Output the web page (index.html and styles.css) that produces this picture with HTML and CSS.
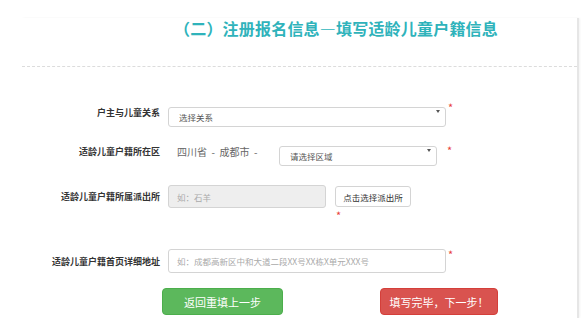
FILE: index.html
```html
<!DOCTYPE html>
<html lang="zh-CN">
<head>
    <meta charset="UTF-8">
    <meta name="viewport" content="width=device-width, initial-scale=1.0">
    <title>注册报名信息</title>
    <link rel="stylesheet" href="styles.css">
</head>
<body>

    <div class="panel">

        <h2 class="title">（二）注册报名信息—填写适龄儿童户籍信息</h2>
        <div class="divider"></div>

        <form class="reg-form">

            <div class="row row-relation">
                <label class="row-label">户主与儿童关系</label>
                <div class="select-wrap w-wide">
                    <select>
                        <option>选择关系</option>
                    </select>
                </div>
                <span class="req">*</span>
            </div>

            <div class="row row-area">
                <label class="row-label">适龄儿童户籍所在区</label>
                <span class="region">四川省 &nbsp;-&nbsp; 成都市 &nbsp;-</span>
                <div class="select-wrap w-area">
                    <select>
                        <option>请选择区域</option>
                    </select>
                </div>
                <span class="req req-far">*</span>
            </div>

            <div class="row row-police">
                <label class="row-label">适龄儿童户籍所属派出所</label>
                <input type="text" class="text-input w-police" placeholder="如：石羊" disabled>
                <div class="pick-col">
                    <button type="button" class="btn-pick">点击选择派出所</button>
                    <span class="req">*</span>
                </div>
            </div>

            <div class="row row-address">
                <label class="row-label">适龄儿童户籍首页详细地址</label>
                <input type="text" class="text-input w-wide" placeholder="如：成都高新区中和大道二段XX号XX栋X单元XXX号">
                <span class="req">*</span>
            </div>

            <div class="actions">
                <button type="button" class="btn btn-back">返回重填上一步</button>
                <button type="button" class="btn btn-next">填写完毕，下一步！</button>
            </div>

        </form>
    </div>

</body>
</html>
```

FILE: styles.css
```css
/* General Styles */
body {
    margin: 0;
    padding: 0;
    font-family: "Noto Sans CJK SC", "Noto Sans", sans-serif;
    background-color: #fff;
    color: #333;
}

.panel {
    width: 555px;
    height: 300px;
    margin: 18px 0 0 22px;
    border-right: 2px solid #e6e6e6;
    box-shadow: 1px 0 2px rgba(0, 0, 0, 0.05);
}

.title {
    margin: 0;
    padding-left: 152px;
    font-size: 16px;
    letter-spacing: 0.2px;
    line-height: 20px;
    font-weight: bold;
    color: #2fb3bb;
    white-space: nowrap;
}

.divider {
    margin-top: 28px;
    border-top: 1px dashed #dcdcdc;
}

/* Form rows */
.row {
    display: flex;
    align-items: center;
}

.row-label {
    width: 138px;
    margin-right: 8px;
    text-align: right;
    font-size: 9px;
    font-weight: bold;
    color: #333;
    white-space: nowrap;
}

.row-relation {
    margin-top: 35px;
    height: 20px;
}

.row-area {
    margin-top: 19px;
    height: 20px;
}

.row-police {
    margin-top: 24px;
    align-items: flex-start;
}

.row-police .row-label {
    line-height: 23px;
}

.row-address {
    margin-top: 29px;
    height: 24px;
}

.req {
    align-self: flex-start;
    margin-left: 2px;
    font-size: 11px;
    line-height: 10px;
    color: #e8403a;
}

.req-far {
    margin-left: 10px;
    margin-top: 4px;
}

/* Selects */
.select-wrap {
    position: relative;
    height: 20px;
}

.select-wrap::after {
    content: "";
    position: absolute;
    right: 6px;
    top: 8px;
    border-left: 2px solid transparent;
    border-right: 2px solid transparent;
    border-top: 3px solid #555;
}

.select-wrap select {
    appearance: none;
    width: 100%;
    height: 100%;
    padding: 0 10px;
    border: 1px solid #d4d4d4;
    border-radius: 3px;
    background: #fff;
    font-family: inherit;
    font-size: 8.5px;
    color: #555;
}

.w-wide {
    width: 278px;
}

.w-area {
    width: 158px;
}

.region {
    width: 102px;
    padding-left: 9px;
    font-size: 10px;
    color: #666;
    white-space: nowrap;
}

/* Inputs */
.text-input {
    box-sizing: border-box;
    height: 24px;
    padding: 0 8px;
    border: 1px solid #d4d4d4;
    border-radius: 3px;
    font-family: inherit;
    font-size: 8.5px;
    color: #555;
}

.text-input::placeholder {
    color: #aaa;
}

.text-input:disabled {
    background-color: #eee;
}

.w-police {
    width: 158px;
    height: 23px;
}

.pick-col {
    display: flex;
    flex-direction: column;
    margin-left: 9px;
}

.pick-col .req {
    margin: 3px 0 0 1px;
    height: 10px;
}

.btn-pick {
    height: 21px;
    width: 76px;
    padding: 0;
    margin-top: 1px;
    border: 1px solid #d4d4d4;
    border-radius: 3px;
    background: #fff;
    font-family: inherit;
    font-size: 8.5px;
    color: #333;
    cursor: pointer;
}

/* Action buttons */
.actions {
    display: flex;
    margin-top: 15px;
    padding-left: 140px;
    gap: 97px;
}

.btn {
    height: 27px;
    border: 1px solid transparent;
    border-radius: 4px;
    font-family: inherit;
    font-size: 11px;
    color: #fff;
    cursor: pointer;
}

.btn-back {
    width: 121px;
    background-color: #5cb85c;
    border-color: #4cae4c;
}

.btn-next {
    width: 118px;
    background-color: #d9534f;
    border-color: #d43f3a;
}
```
